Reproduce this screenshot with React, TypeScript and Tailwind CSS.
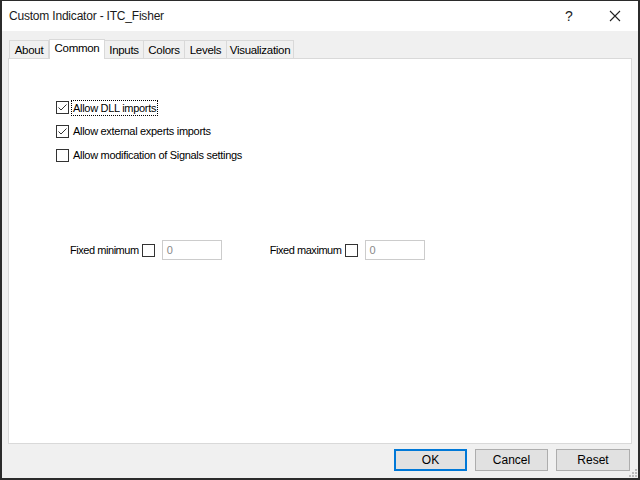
import React from "react"

const font = { fontFamily: '"Liberation Sans", Arial, sans-serif' }

const Check = ({ checked }: { checked?: boolean }) => (
  <span className="w-[13px] h-[13px] border border-[#333333] bg-white flex items-center justify-center shrink-0">
    {checked && (
      <svg width="11" height="11" viewBox="0 0 11 11">
        <polyline points="1.5,5.5 4,8 9.5,2.5" fill="none" stroke="#333333" strokeWidth="1" />
      </svg>
    )}
  </span>
)

const tabs = ["About", "Common", "Inputs", "Colors", "Levels", "Visualization"]
const tabW = [40, 56, 40, 42, 43, 68]

export default function App() {
  return (
    <div
      className="w-[640px] h-[480px] flex flex-col bg-[#f0f0f0] border-t border-x-2 border-b-2 border-[#2b2b2b] text-[#000000] overflow-hidden"
      style={font}
    >
      {/* title bar */}
      <div className="h-[30px] bg-white flex items-center shrink-0">
        <span className="pl-[7px] text-[12px] tracking-[-0.2px] text-[#1a1a1a]">Custom Indicator - ITC_Fisher</span>
        <span className="ml-auto w-[46px] text-center text-[14px] text-[#222]">?</span>
        <span className="w-[46px] flex justify-center">
          <svg width="12" height="12" viewBox="0 0 12 12">
            <path d="M1 1 L11 11 M11 1 L1 11" stroke="#222" strokeWidth="1.1" />
          </svg>
        </span>
      </div>

      {/* tabs */}
      <div className="flex items-end pl-[7px] pt-[7px] h-[27px] shrink-0">
        {tabs.map((t, i) =>
          i === 1 ? (
            <div
              key={t}
              style={{ width: tabW[i] }}
              className="h-[20px] -mb-px relative z-10 bg-white border border-b-0 border-[#d9d9d9] flex items-center justify-center text-[11.5px] tracking-[-0.3px] pb-[1px]"
            >
              {t}
            </div>
          ) : (
            <div
              key={t}
              style={{ width: tabW[i] }}
              className="h-[18px] bg-[#f0f0f0] border border-b-0 border-[#d9d9d9] -ml-px first:ml-0 flex items-center justify-center text-[11.5px] tracking-[-0.3px] pt-[3px]"
            >
              {t}
            </div>
          )
        )}
      </div>

      {/* panel */}
      <div className="mx-[6px] h-[386px] bg-white border border-[#d9d9d9] shrink-0 flex flex-col">
        <div className="pt-[42px] pl-[47px] flex flex-col gap-[11px]">
          <label className="flex items-center gap-[3px] h-[13px]">
            <Check checked />
            <span className="text-[11px] tracking-[-0.3px] outline-1 outline-dotted outline-[#000] px-[1px] leading-[14px]">Allow DLL imports</span>
          </label>
          <label className="flex items-center gap-[3px] h-[13px]">
            <Check checked />
            <span className="text-[11px] tracking-[-0.3px] px-[1px]">Allow external experts imports</span>
          </label>
          <label className="flex items-center gap-[3px] h-[13px]">
            <Check />
            <span className="text-[11px] tracking-[-0.3px] px-[1px]">Allow modification of Signals settings</span>
          </label>
        </div>

        <div className="mt-[78px] pl-[61px] flex items-center h-[20px]">
          <span className="text-[11px] tracking-[-0.45px]">Fixed minimum</span>
          <span className="ml-[3px]"><Check /></span>
          <span className="ml-[7px] w-[60px] h-[20px] border border-[#cccccc] text-[11px] text-[#8a8a8a] pl-[4px] flex items-center">0</span>
          <span className="ml-[48px] text-[11px] tracking-[-0.45px]">Fixed maximum</span>
          <span className="ml-[3px]"><Check /></span>
          <span className="ml-[7px] w-[60px] h-[20px] border border-[#cccccc] text-[11px] text-[#8a8a8a] pl-[4px] flex items-center">0</span>
        </div>
      </div>

      {/* buttons */}
      <div className="flex justify-end gap-[8px] pr-[8px] pt-[5px] relative flex-1">
        <button className="w-[73px] h-[22px] bg-[#e1e1e1] border-2 border-[#0078d7] text-[12px]">OK</button>
        <button className="w-[73px] h-[22px] bg-[#e1e1e1] border border-[#adadad] text-[12px]">Cancel</button>
        <button className="w-[74px] h-[22px] bg-[#e1e1e1] border border-[#adadad] text-[12px]">Reset</button>
        <svg className="absolute right-0 bottom-0" width="10" height="10" viewBox="0 0 10 10">
          <g fill="#bcbcbc">
            <rect x="7" y="1" width="2" height="2" />
            <rect x="4" y="4" width="2" height="2" />
            <rect x="7" y="4" width="2" height="2" />
            <rect x="1" y="7" width="2" height="2" />
            <rect x="4" y="7" width="2" height="2" />
            <rect x="7" y="7" width="2" height="2" />
          </g>
        </svg>
      </div>
    </div>
  )
}
